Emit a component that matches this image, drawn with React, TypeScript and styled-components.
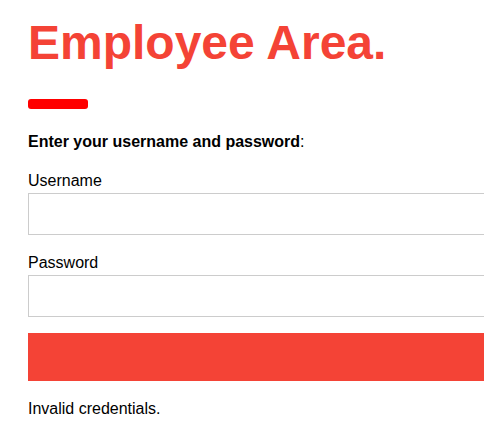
import React from "react";
import styled, { createGlobalStyle } from "styled-components";

const Global = createGlobalStyle`
  html, body { margin: 0; padding: 0; background: #fff; overflow: hidden; }
  body { font-family: "Liberation Sans", Arial, sans-serif; color: #000; }
  * { box-sizing: border-box; }
`;

const Page = styled.main`
  padding: 15px 0 0 28px;
`;

const Title = styled.h1`
  margin: 0;
  font-size: 48px;
  line-height: 56px;
  font-weight: 700;
  color: #f44336;
`;

const Bar = styled.div`
  width: 60px;
  height: 10px;
  margin-top: 28px;
  border-radius: 3px;
  background: #ff0000;
`;

const Intro = styled.p`
  margin: 23px 0 0;
  font-size: 16px;
  line-height: 19px;
`;

const Form = styled.form`
  display: flex;
  flex-direction: column;
`;

const Label = styled.label<{ $gap: number }>`
  margin-top: ${(p) => p.$gap}px;
  font-size: 16px;
  line-height: 19px;
`;

const Input = styled.input`
  display: block;
  width: calc(100% + 20px);
  height: 42px;
  margin-top: 3px;
  border: 1px solid #ccc;
  padding: 0 12px;
  font: inherit;
  background: #fff;
`;

const Submit = styled.button`
  display: block;
  width: calc(100% + 20px);
  height: 48px;
  margin-top: 16px;
  border: none;
  background: #f44336;
  cursor: pointer;
`;

const Message = styled.p`
  margin: 18px 0 0;
  font-size: 16px;
  line-height: 19px;
`;

export default function App() {
  return (
    <>
      <Global />
      <Page>
        <Title>Employee Area.</Title>
        <Bar />
        <Intro>
          <b>Enter your username and password</b>:
        </Intro>
        <Form onSubmit={(e) => e.preventDefault()}>
          <Label $gap={20} htmlFor="u">Username</Label>
          <Input id="u" type="text" />
          <Label $gap={18} htmlFor="p">Password</Label>
          <Input id="p" type="password" />
          <Submit type="submit" aria-label="Log in" />
        </Form>
        <Message>Invalid credentials.</Message>
      </Page>
    </>
  );
}
